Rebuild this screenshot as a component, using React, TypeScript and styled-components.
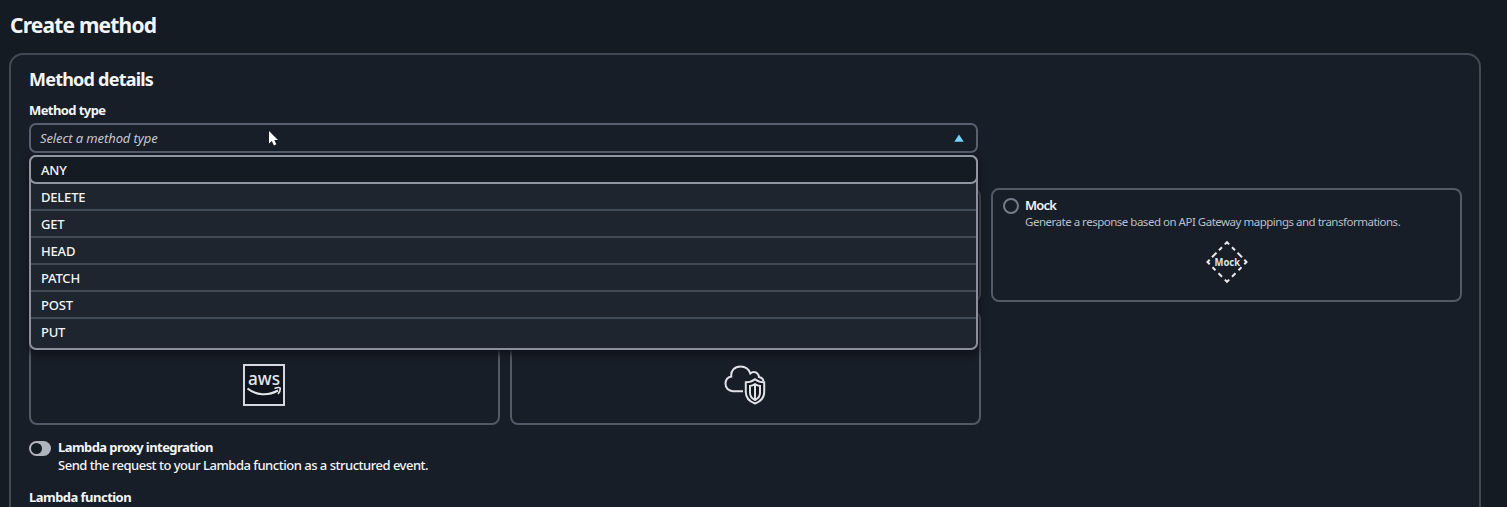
import React from "react";
import styled, { createGlobalStyle } from "styled-components";

const GlobalStyle = createGlobalStyle`
  * { box-sizing: border-box; }
  html, body { margin: 0; height: 100%; overflow: hidden; background: #151b23; }
  body { font-family: "Noto Sans", "Open Sans", sans-serif; color: #f3f5f8; }
`;

const Page = styled.main`
  height: 507px;
  overflow: hidden;
  padding: 10px 26px 0 9px;
`;

const Line = styled.span<{ $size: number; $spacing?: number; $weight?: number; $height?: number }>`
  display: block;
  white-space: nowrap;
  font-size: ${(p) => p.$size}px;
  font-weight: ${(p) => p.$weight ?? 400};
  letter-spacing: ${(p) => p.$spacing ?? 0}px;
  line-height: ${(p) => p.$height ?? 18}px;
`;

const PageTitle = styled(Line).attrs({ as: "h1" })`
  margin: 0 0 13px 1px;
`;

const Panel = styled.section`
  height: 520px;
  padding: 11px 18px 0;
  border: 2px solid #424a56;
  border-radius: 14px;
  background: #181e27;
`;

const PanelTitle = styled(Line).attrs({ as: "h2" })`
  margin: 0 0 8px;
`;

const Field = styled.div`
  position: relative;
  width: 949px;
  margin-top: 3px;
`;

const SelectBox = styled.div`
  display: flex;
  align-items: center;
  justify-content: space-between;
  height: 30px;
  padding: 0 12px 0 9px;
  border: 2px solid #596170;
  border-radius: 7px;
  background: #181e27;
  color: #c3c8d2;
  font-style: italic;
`;

const Menu = styled.ul`
  position: absolute;
  z-index: 2;
  top: 32px;
  left: 0;
  width: 949px;
  height: 195px;
  margin: 0;
  padding: 0;
  list-style: none;
  border: 2px solid #8a919d;
  border-radius: 7px;
  background: #1e252e;
  box-shadow: 0 3px 7px 1px #0e131b;
`;

const Option = styled.li<{ $active?: boolean }>`
  display: flex;
  align-items: center;
  height: ${(p) => (p.$active ? 29 : 27)}px;
  margin: ${(p) => (p.$active ? "-2px -2px 0" : "0")};
  padding: 0 0 0 10px;
  border: ${(p) => (p.$active ? "2px solid #9096a2" : "0")};
  border-radius: ${(p) => (p.$active ? "7px" : "0")};
  background: ${(p) => (p.$active ? "#151b23" : "transparent")};
  & + & { border-bottom: 2px solid #414b58; }
  &:last-child { border-bottom: 0; height: 26px; }
`;

const Tiles = styled.div`
  display: grid;
  grid-template-columns: repeat(3, 471px);
  grid-auto-rows: 114px;
  gap: 9px 10px;
  margin-top: 35px;
`;

const Tile = styled.div`
  display: flex;
  flex-direction: column;
  padding: 7px 10px 0;
  border: 2px solid #525a67;
  border-radius: 8px;
  background: #181e27;
`;

const TileHeader = styled.div`
  display: flex;
  align-items: flex-start;
  gap: 6px;
  height: 44px;
`;

const Radio = styled.span`
  flex: none;
  width: 16px;
  height: 16px;
  margin-top: 1px;
  border: 2px solid #757c89;
  border-radius: 50%;
`;

const Description = styled(Line)`
  margin-top: 1px;
  color: #b9bfca;
`;

const TileIcon = styled.svg`
  display: block;
  margin: 0 auto;
  overflow: visible;
`;

const BrandIcon = styled(TileIcon)`
  margin-left: 202px;
`;

const ToggleRow = styled.div`
  display: flex;
  gap: 7px;
  margin-top: 13px;
  height: 51px;
`;

const Toggle = styled.span`
  flex: none;
  display: flex;
  width: 22px;
  height: 15px;
  margin-top: 3px;
  padding: 2px;
  border-radius: 8px;
  background: #b2b4bd;
  &::before {
    content: "";
    width: 11px;
    height: 11px;
    border-radius: 50%;
    background: #151b23;
  }
`;

const Pointer = styled.svg`
  position: absolute;
  z-index: 3;
  left: 239px;
  top: 7px;
`;

const methods = ["ANY", "DELETE", "GET", "HEAD", "PATCH", "POST", "PUT"];

function AwsIcon() {
  return (
    <BrandIcon width="42" height="42" viewBox="0 0 42 42">
      <rect x="1" y="1" width="40" height="40" fill="#10151d" stroke="#d5d8df" strokeWidth="2" />
      <text x="5" y="21" fill="#e3e6eb" fontFamily="Noto Sans" fontSize="18" fontWeight="500" textLength="32" lengthAdjust="spacingAndGlyphs">aws</text>
      <path d="M4.5 24.5 C13 31.5 25 32 35 26.5" fill="none" stroke="#e3e6eb" strokeWidth="2" />
      <path d="M31.5 24.5 C35 23 37.5 23.5 37.3 24.5 C37.3 27 36.5 28.5 35 30" fill="none" stroke="#e3e6eb" strokeWidth="1.6" />
    </BrandIcon>
  );
}

function CloudShieldIcon() {
  return (
    <BrandIcon width="42" height="42" viewBox="0 0 42 42" fill="none" stroke="#dfe2e8">
      <path d="M19 27.2 H9 C4.5 27.2 1.5 24 1.5 19.8 C1.5 16 4 13.2 7.3 12.5 C6.5 7 10.5 2.5 16.5 2.5 C21.5 2.5 24.8 5 26.3 9.5 C30 6 34.5 9 35 13 C38.5 13.5 39 15 39.5 17" strokeWidth="2" />
      <path d="M31 15.2 C33.5 17.2 36.5 18.2 40.2 18.2 V28 C40.2 34 36.5 37.5 31 39.5 C25.5 37.5 21.8 34 21.8 28 V18.2 C25.5 18.2 28.5 17.2 31 15.2 Z" fill="#10151d" strokeWidth="2" />
      <path d="M31 20 C32.5 21 34 21.8 36 22 V29 C36 32.5 34 34.5 31 36 C28 34.5 26 32.5 26 29 V22 C28 21.8 29.5 21 31 20 Z M31 20 V36" strokeWidth="2" />
    </BrandIcon>
  );
}

function MockIcon() {
  return (
    <TileIcon width="42" height="42" viewBox="0 0 42 42">
      <g fill="none" stroke="#e8eaef" strokeWidth="2">
        <path d="M18.8 3.4 L21 1.2 L23.2 3.4 M38.3 18.8 L40.5 21 L38.3 23.2 M23.2 38.6 L21 40.8 L18.8 38.6 M3.7 23.2 L1.5 21 L3.7 18.8" />
        <path d="M26 6.2 L29 9.2 M31.5 11.7 L36 16.2 M16 6.2 L13 9.2 M10.5 11.7 L6 16.2 M6.5 26.2 L9.5 29.2 M12.5 32.2 L16 35.7 M35.5 26.2 L32.5 29.2 M29.5 32.2 L26 35.7" />
      </g>
      <text x="8.5" y="25" fill="#dfe2e8" fontFamily="Noto Sans" fontSize="10.5" fontWeight="700" textLength="25.5" lengthAdjust="spacingAndGlyphs">Mock</text>
    </TileIcon>
  );
}

export default function App() {
  return (
    <>
      <GlobalStyle />
      <Page>
        <PageTitle $size={21} $weight={700} $spacing={-0.82} $height={30}>Create method</PageTitle>
        <Panel>
          <PanelTitle $size={18} $weight={700} $spacing={-0.78} $height={26}>Method details</PanelTitle>
          <Line $size={13} $weight={700} $spacing={-0.58} $height={20}>Method type</Line>
          <Field>
            <SelectBox>
              <Line $size={13} $spacing={-0.1}>Select a method type</Line>
              <svg width="10" height="8" viewBox="0 0 10 8"><path d="M5 0.5 L9.7 7.7 H0.3 Z" fill="#75d2f9" /></svg>
            </SelectBox>
            <Menu>
              {methods.map((name, i) => (
                <Option key={name} $active={i === 0}>
                  <Line $size={13} $spacing={-0.2} $weight={500}>{name}</Line>
                </Option>
              ))}
            </Menu>
            <Pointer width="11" height="16" viewBox="0 0 11 16">
              <path d="M1 1 V13.5 L3.8 11 L6 15.5 L8.3 14.3 L6.4 10 H10 Z" fill="#fff" />
            </Pointer>
          </Field>
          <Tiles>
            <Tile />
            <Tile />
            <Tile>
              <TileHeader>
                <Radio />
                <div>
                  <Line $size={13} $weight={600} $spacing={-0.8} $height={16}>Mock</Line>
                  <Description $size={11.5} $spacing={-0.49} $height={16}>Generate a response based on API Gateway mappings and transformations.</Description>
                </div>
              </TileHeader>
              <MockIcon />
            </Tile>
            <Tile>
              <TileHeader />
              <AwsIcon />
            </Tile>
            <Tile>
              <TileHeader />
              <CloudShieldIcon />
            </Tile>
          </Tiles>
          <ToggleRow>
            <Toggle />
            <div>
              <Line $size={13} $weight={700} $spacing={-0.57}>Lambda proxy integration</Line>
              <Line $size={13} $weight={500} $spacing={-0.49}>Send the request to your Lambda function as a structured event.</Line>
            </div>
          </ToggleRow>
          <Line $size={13} $weight={700} $spacing={-0.53} $height={17}>Lambda function</Line>
        </Panel>
      </Page>
    </>
  );
}
